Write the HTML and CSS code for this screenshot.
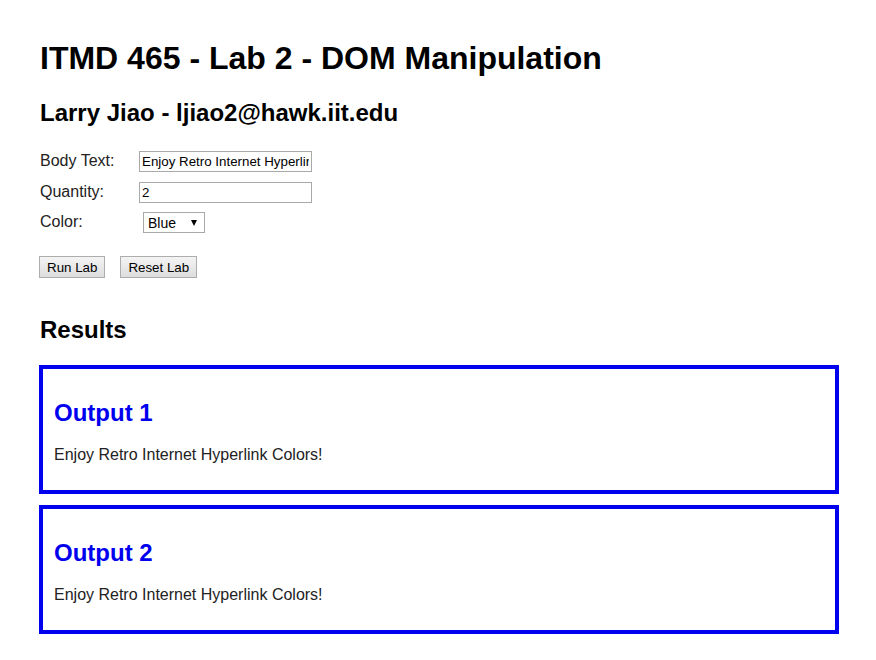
FILE: index.html
```html
<!DOCTYPE html>
<html lang="en">
<head>
<meta charset="utf-8">
<title>ITMD 465 - Lab 2 - DOM Manipulation</title>
<link rel="stylesheet" href="styles.css">
</head>
<body>
<div class="page">
  <h1 class="title">ITMD 465 - Lab 2 - DOM Manipulation</h1>
  <h2 class="author">Larry Jiao - ljiao2@hawk.iit.edu</h2>

  <form class="lab-form">
    <div class="row row-text">
      <label class="label" for="bodyText">Body Text:</label>
      <input class="field" id="bodyText" type="text" value="Enjoy Retro Internet Hyperlink Colors!">
    </div>
    <div class="row row-qty">
      <label class="label" for="qty">Quantity:</label>
      <input class="field" id="qty" type="text" value="2">
    </div>
    <div class="row row-color">
      <label class="label" for="color">Color:</label>
      <div class="select-wrap">
        <select class="select" id="color">
          <option>Blue</option>
          <option>Red</option>
          <option>Green</option>
        </select>
      </div>
    </div>
    <div class="buttons">
      <button type="button" class="btn">Run Lab</button>
      <button type="button" class="btn">Reset Lab</button>
    </div>
  </form>

  <h2 class="results-title">Results</h2>

  <div class="results">
    <div class="output">
      <h2 class="output-title">Output 1</h2>
      <p class="output-text">Enjoy Retro Internet Hyperlink Colors!</p>
    </div>
    <div class="output">
      <h2 class="output-title">Output 2</h2>
      <p class="output-text">Enjoy Retro Internet Hyperlink Colors!</p>
    </div>
  </div>
</div>
</body>
</html>
```

FILE: styles.css
```css
html, body {
  margin: 0;
  padding: 0;
  background: #ffffff;
}

body {
  font-family: "Liberation Sans", Arial, sans-serif;
  font-size: 16px;
  color: #222222;
}

.page {
  width: 800px;
  margin-left: 39px;
  padding-top: 40px;
}

.title {
  margin: 0 0 0 1px;
  font-size: 32px;
  font-weight: bold;
  color: #000000;
  line-height: 37px;
}

.author {
  margin: 22px 0 0 1px;
  font-size: 24px;
  font-weight: bold;
  color: #000000;
  line-height: 28px;
}

.lab-form {
  margin-top: 24px;
}

.row {
  display: flex;
  align-items: flex-start;
}

.label {
  width: 100px;
  padding-left: 1px;
  padding-top: 1px;
  box-sizing: border-box;
  line-height: 18px;
  color: #222222;
}

.row-text {
  margin-bottom: 10px;
}

.row-qty {
  margin-bottom: 9px;
}

.field {
  box-sizing: border-box;
  width: 173px;
  height: 21px;
  margin: 0;
  padding: 1px 2px;
  border: 1px solid #a9a9a9;
  font-family: "Liberation Sans", Arial, sans-serif;
  font-size: 13.33px;
  color: #000000;
  background: #ffffff;
}

.select-wrap {
  position: relative;
  margin-left: 4px;
}

.select {
  box-sizing: border-box;
  width: 62px;
  height: 21px;
  margin: 0;
  padding: 0 0 0 4px;
  border: 1px solid #a9a9a9;
  background: #ffffff;
  font-family: "Liberation Sans", Arial, sans-serif;
  font-size: 14px;
  color: #000000;
  -webkit-appearance: none;
  appearance: none;
  border-radius: 0;
}

.select-wrap::after {
  content: "";
  position: absolute;
  left: 48px;
  top: 8px;
  width: 0;
  height: 0;
  border-left: 3.5px solid transparent;
  border-right: 3.5px solid transparent;
  border-top: 6px solid #000000;
  pointer-events: none;
}

.buttons {
  display: flex;
  gap: 15px;
  margin-top: 23px;
}

.btn {
  box-sizing: border-box;
  height: 22px;
  margin: 0;
  padding: 1px 7px;
  border: 1px solid #adadad;
  border-radius: 0;
  background: linear-gradient(#f4f4f4, #dddddd);
  font-family: "Liberation Sans", Arial, sans-serif;
  font-size: 13.33px;
  color: #000000;
}

.results-title {
  margin: 38px 0 0 1px;
  font-size: 24px;
  font-weight: bold;
  color: #000000;
  line-height: 28px;
}

.results {
  display: flex;
  flex-direction: column;
  gap: 11px;
  margin-top: 21px;
}

.output {
  box-sizing: border-box;
  width: 800px;
  border: 4px solid #0000ee;
  padding: 30px 10px 26px;
}

.output-title {
  margin: 0 0 19px 1px;
  font-size: 24px;
  font-weight: bold;
  color: #0000ee;
  line-height: 28px;
}

.output-text {
  margin: 0 0 0 1px;
  line-height: 18px;
  color: #222222;
}
```
